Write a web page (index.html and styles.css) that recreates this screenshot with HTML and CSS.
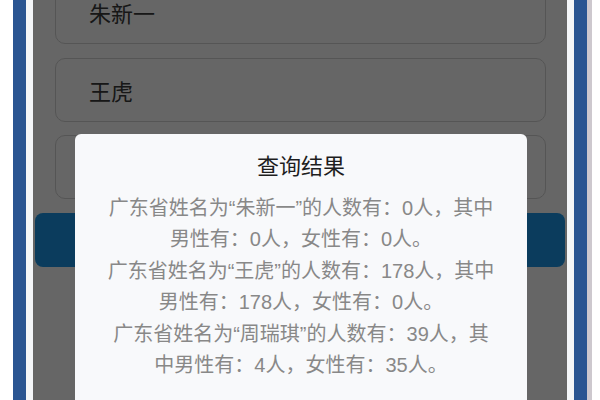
FILE: index.html
```html
<!DOCTYPE html>
<html lang="zh-CN">
<head>
<meta charset="utf-8">
<title>查询结果</title>
<link rel="stylesheet" href="styles.css">
</head>
<body>
<div class="frame">
  <div class="edge-white-outer"></div>
  <div class="edge-blue"></div>
  <div class="edge-white-inner"></div>
  <div class="screen">
    <div class="form">
      <div class="field">朱新一</div>
      <div class="field">王虎</div>
      <div class="field"></div>
      <div class="button"></div>
    </div>
    <div class="mask"></div>
    <div class="dialog">
      <div class="dialog-title">查询结果</div>
      <div class="dialog-body">
        <p>广东省姓名为“朱新一”的人数有：0人，其中男性有：0人，女性有：0人。</p>
        <p>广东省姓名为“王虎”的人数有：178人，其中男性有：178人，女性有：0人。</p>
        <p>广东省姓名为“周瑞琪”的人数有：39人，其中男性有：4人，女性有：35人。</p>
      </div>
    </div>
  </div>
  <div class="edge-white-inner-r"></div>
  <div class="edge-blue"></div>
  <div class="edge-grey"></div>
  <div class="edge-white-outer-r"></div>
</div>
</body>
</html>
```

FILE: styles.css
```css
html, body {
  margin: 0;
  padding: 0;
  width: 600px;
  height: 400px;
  overflow: hidden;
  background: #ffffff;
  font-family: "Liberation Sans", "Noto Sans CJK SC", sans-serif;
}

.frame {
  display: flex;
  height: 400px;
}

.edge-white-outer { width: 13px; background: #ffffff; }
.edge-blue { width: 13px; background: #2a5592; }
.edge-white-inner { width: 7px; background: #f4f6f8; }
.edge-white-inner-r { width: 7px; background: #f4f6f8; }
.edge-grey { width: 5px; background: #cdc8ce; }
.edge-white-outer-r { width: 8px; background: #ffffff; }

.screen {
  position: relative;
  width: 534px;
  height: 400px;
  overflow: hidden;
  background: #ffffff;
}

.form {
  display: flex;
  flex-direction: column;
  margin-top: -20px;
}

.field {
  height: 64px;
  box-sizing: border-box;
  margin: 0 21px 14px 22px;
  border: 1.5px solid #d4d4d4;
  border-radius: 10px;
  padding-left: 33px;
  display: flex;
  align-items: center;
  font-size: 22px;
  color: #3a3a3a;
}

.field + .field + .field {
  margin-bottom: 14px;
  margin-top: -1px;
}

.button {
  height: 54px;
  margin: 0 2px;
  border-radius: 8px;
  background: #1c96e8;
}

.mask {
  position: absolute;
  inset: 0;
  background: rgba(0, 0, 0, 0.6);
}

.dialog {
  position: absolute;
  left: 42px;
  top: 134px;
  width: 452px;
  height: 320px;
  background: #f8f9fb;
  border-radius: 6px;
  padding-top: 17px;
  box-sizing: border-box;
  text-align: center;
}

.dialog-title {
  font-size: 22px;
  line-height: 32px;
  color: #1e1e1e;
  margin-bottom: 10px;
}

.dialog-body {
  width: 391px;
  margin: 0 auto;
  font-size: 20px;
  line-height: 31.4px;
  color: #888888;
}

.dialog-body p {
  margin: 0;
}
```
